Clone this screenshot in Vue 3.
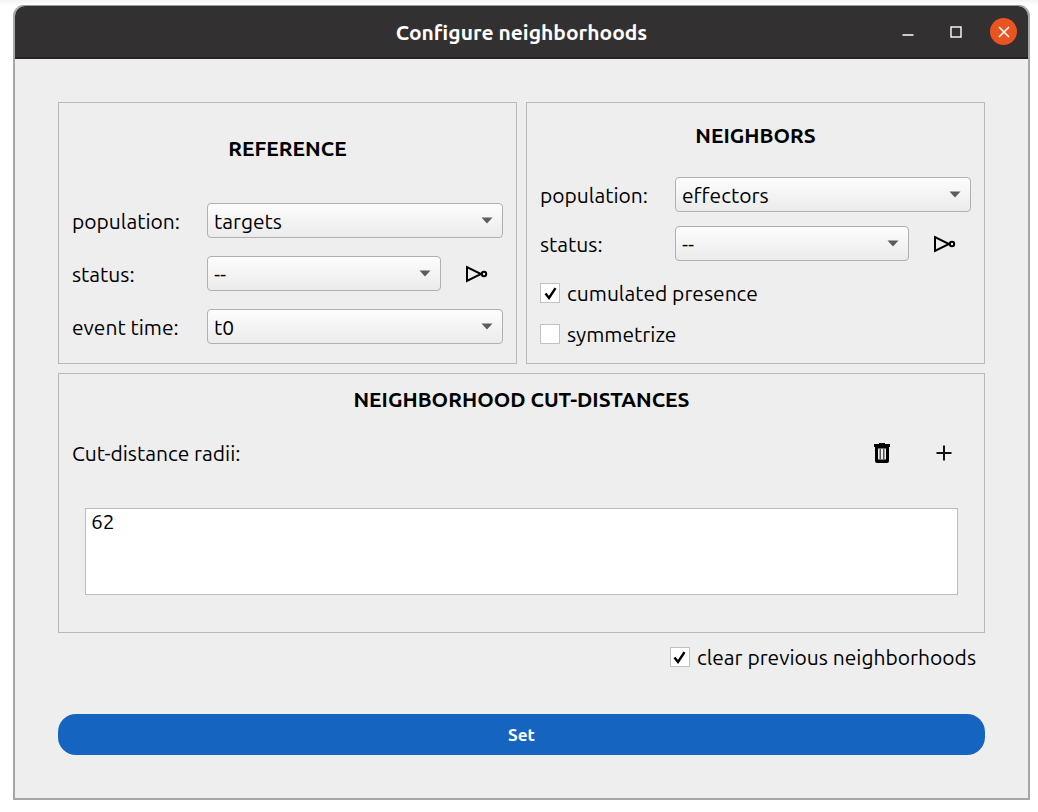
<script setup>
import { ref } from 'vue'

const refPopulation = ref('targets')
const refStatus = ref('--')
const eventTime = ref('t0')
const neighPopulation = ref('effectors')
const neighStatus = ref('--')
const cumulated = ref(true)
const symmetrize = ref(false)
const clearPrevious = ref(true)
const radii = ref(['62'])
const selectedRadii = ref([])
</script>

<template>
  <div class="desktop">
    <main class="window">
      <header class="titlebar">
        <h1>Configure neighborhoods</h1>
        <div class="controls">
          <button type="button" aria-label="Minimize">
            <svg width="12" height="12" viewBox="0 0 12 12"><path d="M0.5 9h11" stroke="#fff" stroke-width="1.5" /></svg>
          </button>
          <button type="button" aria-label="Maximize">
            <svg width="12" height="12" viewBox="0 0 12 12"><rect x="1" y="1" width="10" height="10" fill="none" stroke="#fff" stroke-width="1.4" /></svg>
          </button>
          <button type="button" class="close" aria-label="Close">
            <svg width="12" height="12" viewBox="0 0 12 12"><path d="M1 1l10 10M11 1L1 11" stroke="#fff" stroke-width="1.6" /></svg>
          </button>
        </div>
      </header>

      <form class="content" @submit.prevent>
        <div class="groups">
          <section class="group reference">
            <h2>REFERENCE</h2>
            <div class="row">
              <label for="ref-pop">population:</label>
              <span class="combo">
                <select id="ref-pop" v-model="refPopulation"><option>targets</option><option>effectors</option></select>
                <svg class="arrow" width="12" height="7" viewBox="0 0 12 7"><path d="M0.5 0.5h11L6 6.5z" /></svg>
              </span>
            </div>
            <div class="row">
              <label for="ref-status">status:</label>
              <span class="combo">
                <select id="ref-status" v-model="refStatus"><option>--</option></select>
                <svg class="arrow" width="12" height="7" viewBox="0 0 12 7"><path d="M0.5 0.5h11L6 6.5z" /></svg>
              </span>
              <button type="button" class="tool" aria-label="Invert reference status">
                <svg width="24" height="18" viewBox="0 0 24 18" fill="none" stroke="#000" stroke-width="2"><path d="M2 2v14L16 9z" /><circle cx="19" cy="9" r="2.2" /></svg>
              </button>
            </div>
            <div class="row">
              <label for="event-time">event time:</label>
              <span class="combo">
                <select id="event-time" v-model="eventTime"><option>t0</option></select>
                <svg class="arrow" width="12" height="7" viewBox="0 0 12 7"><path d="M0.5 0.5h11L6 6.5z" /></svg>
              </span>
            </div>
          </section>

          <section class="group neighbors">
            <h2>NEIGHBORS</h2>
            <div class="row">
              <label for="nei-pop">population:</label>
              <span class="combo">
                <select id="nei-pop" v-model="neighPopulation"><option>effectors</option><option>targets</option></select>
                <svg class="arrow" width="12" height="7" viewBox="0 0 12 7"><path d="M0.5 0.5h11L6 6.5z" /></svg>
              </span>
            </div>
            <div class="row">
              <label for="nei-status">status:</label>
              <span class="combo">
                <select id="nei-status" v-model="neighStatus"><option>--</option></select>
                <svg class="arrow" width="12" height="7" viewBox="0 0 12 7"><path d="M0.5 0.5h11L6 6.5z" /></svg>
              </span>
              <button type="button" class="tool" aria-label="Invert neighbor status">
                <svg width="24" height="18" viewBox="0 0 24 18" fill="none" stroke="#000" stroke-width="2"><path d="M2 2v14L16 9z" /><circle cx="19" cy="9" r="2.2" /></svg>
              </button>
            </div>
            <div class="checks">
              <label class="check">
                <span class="box">
                  <input v-model="cumulated" type="checkbox" />
                  <svg v-if="cumulated" class="tick" width="13" height="13" viewBox="0 0 13 13"><path d="M1.5 6.5L5 11L11.5 1.2" /></svg>
                </span>
                cumulated presence
              </label>
              <label class="check">
                <span class="box">
                  <input v-model="symmetrize" type="checkbox" />
                  <svg v-if="symmetrize" class="tick" width="13" height="13" viewBox="0 0 13 13"><path d="M1.5 6.5L5 11L11.5 1.2" /></svg>
                </span>
                symmetrize
              </label>
            </div>
          </section>
        </div>

        <section class="group distances">
          <h2>NEIGHBORHOOD CUT-DISTANCES</h2>
          <div class="row">
            <label class="wide" for="radii">Cut-distance radii:</label>
            <button type="button" class="tool" aria-label="Delete radius">
              <svg width="18" height="22" viewBox="0 0 18 22"><path d="M6 1h6v1h5v3H1V2h5z" /><path fill-rule="evenodd" d="M2 4h14v15q0 2-2 2H4q-2 0-2-2zM5 6.5v11h8v-11z" /><path d="M6.5 6.5h1.5v11H6.5zM10 6.5h1.5v11H10z" fill="#555" /></svg>
            </button>
            <button type="button" class="tool" aria-label="Add radius">
              <svg width="16" height="16" viewBox="0 0 16 16"><path d="M8 0.5v15M0.5 8h15" stroke="#111" stroke-width="2" /></svg>
            </button>
          </div>
          <select id="radii" v-model="selectedRadii" class="list" multiple>
            <option v-for="r in radii" :key="r">{{ r }}</option>
          </select>
        </section>

        <label class="check clear">
          <span class="box">
            <input v-model="clearPrevious" type="checkbox" />
            <svg v-if="clearPrevious" class="tick" width="13" height="13" viewBox="0 0 13 13"><path d="M1.5 6.5L5 11L11.5 1.2" /></svg>
          </span>
          clear previous neighborhoods
        </label>

        <button type="submit" class="submit">Set</button>
      </form>
    </main>
  </div>
</template>

<style>
body {
  margin: 0;
  background: #fff;
}
</style>

<style scoped>
* {
  box-sizing: border-box;
}
.desktop {
  display: flex;
  min-height: 100vh;
  padding: 5px 8px 12px 13px;
  background: linear-gradient(#f4f4f4, #fff 5px);
  font-family: Ubuntu, "Noto Sans", "Open Sans", sans-serif;
  font-size: 21px;
  line-height: 24px;
  color: #000;
}
.window {
  flex: 1;
  display: flex;
  flex-direction: column;
  border: 2px solid #a6a6a6;
  border-top: 1px solid #9a9c9a;
  border-radius: 11px 11px 0 0;
  background: #eee;
}
.titlebar {
  display: grid;
  grid-template-columns: 1fr auto 1fr;
  align-items: center;
  height: 53px;
  border-bottom: 2px solid #262223;
  border-radius: 10px 10px 0 0;
  background: #333031;
}
h1 {
  grid-column: 2;
  margin: 0;
  font-size: 21px;
  font-weight: 600;
  color: #fff;
}
.controls {
  display: flex;
  justify-content: flex-end;
  gap: 21px;
  padding-right: 11px;
}
button {
  display: flex;
  align-items: center;
  justify-content: center;
  padding: 0;
  border: 0;
  background: none;
  font: inherit;
}
.controls button {
  width: 27px;
  height: 27px;
  border-radius: 50%;
}
.controls .close {
  background: #e95420;
}
.content {
  flex: 1;
  display: flex;
  flex-direction: column;
  padding: 43px 43px 42px;
}
.groups {
  display: grid;
  grid-template-columns: 1fr 1fr;
  gap: 9px;
}
.group {
  display: flex;
  flex-direction: column;
  padding: 0 13px;
  border: 1px solid #b9b9b9;
}
h2 {
  margin: 0;
  text-align: center;
  font-size: 21px;
  line-height: 24px;
  font-weight: 700;
}
.reference {
  gap: 18px;
  padding-top: 33px;
  padding-bottom: 19px;
}
.reference h2 {
  margin-bottom: 25px;
}
.neighbors {
  padding-top: 20px;
  gap: 14px;
}
.neighbors h2 {
  margin-bottom: 16px;
}
.row {
  display: flex;
  align-items: center;
}
.row label {
  width: 135px;
}
.row .wide {
  flex: 1;
}
.combo {
  flex: 1;
  display: grid;
  align-items: center;
}
.combo select,
.arrow {
  grid-area: 1 / 1;
}
.combo select {
  appearance: none;
  height: 35px;
  width: 100%;
  padding: 0 30px 0 6px;
  border: 1px solid #b0b0b0;
  border-radius: 4px;
  background: linear-gradient(#fdfdfd, #ebebeb);
  font: inherit;
  color: inherit;
}
.arrow {
  justify-self: end;
  margin-right: 10px;
  fill: #5c5c5c;
  pointer-events: none;
}
.tool {
  width: 62px;
  height: 34px;
}
.row .combo + .tool {
  padding-left: 10px;
}
.checks {
  display: flex;
  flex-direction: column;
  gap: 17px;
  margin-top: 6px;
}
.check {
  display: flex;
  align-items: center;
  gap: 7px;
}
.box {
  display: grid;
  place-items: center;
}
.box input,
.tick {
  grid-area: 1 / 1;
}
.box input {
  appearance: none;
  width: 20px;
  height: 20px;
  margin: 0;
  border: 1px solid #c2c2c2;
  background: #fff;
}
.tick {
  fill: none;
  stroke: #000;
  stroke-width: 2.4;
  pointer-events: none;
}
.distances {
  margin-top: 9px;
  padding-top: 13px;
  padding-bottom: 37px;
}
.distances .row {
  margin: 25px -4px 38px 0;
}
.list {
  appearance: none;
  height: 87px;
  margin: 0 13px;
  padding: 0;
  border: 1px solid #bcbcbc;
  border-radius: 0;
  background: #fff;
  font: inherit;
  color: inherit;
  overflow: hidden;
}
.list option {
  padding: 0 5px;
}
.clear {
  align-self: flex-end;
  margin: 12px 9px 45px 0;
}
.submit {
  height: 41px;
  border-radius: 18px;
  background: #1565c0;
  font-size: 17px;
  font-weight: 600;
  color: #fff;
}
</style>
